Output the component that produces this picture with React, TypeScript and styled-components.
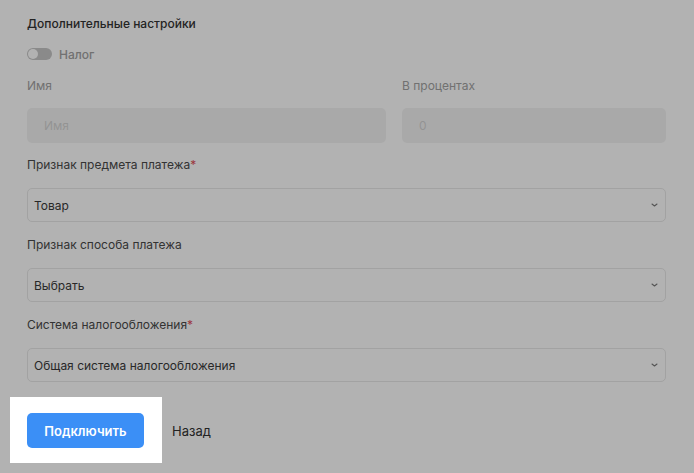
import React from 'react';
import styled, { createGlobalStyle } from 'styled-components';

const GlobalStyle = createGlobalStyle`
  html, body {
    margin: 0;
    padding: 0;
    background: #ffffff;
    font-family: Inter, 'Noto Sans', sans-serif;
    overflow: hidden;
  }
`;

const Page = styled.div`
  width: 694px;
  height: 473px;
  padding: 14px 28px 0 27px;
  box-sizing: border-box;
  display: flex;
  flex-direction: column;
`;

const Title = styled.div`
  font-size: 12px;
  font-weight: 500;
  line-height: 20px;
  color: #333333;
`;

const ToggleRow = styled.div`
  display: flex;
  align-items: center;
  gap: 7px;
  height: 20px;
  margin-top: 10px;
  font-size: 12px;
  font-weight: 500;
  color: #a2a2a2;
`;

const Track = styled.div`
  width: 25px;
  height: 12px;
  border-radius: 6px;
  background: #c6c6c6;
  padding: 1px;
  box-sizing: border-box;
  display: flex;
  align-items: center;
`;

const Knob = styled.div`
  width: 10px;
  height: 10px;
  border-radius: 50%;
  background: #ffffff;
`;

const Row = styled.div`
  display: grid;
  grid-template-columns: 359px 1fr;
  column-gap: 16px;
  margin-top: 12px;
`;

const Field = styled.div`
  display: flex;
  flex-direction: column;
`;

const Label = styled.div<{ $muted?: boolean }>`
  font-size: 12px;
  line-height: 20px;
  color: ${p => (p.$muted ? '#a2a2a2' : '#4a4a4a')};
  margin-bottom: ${p => (p.$muted ? '12px' : '13px')};
`;

const Star = styled.span`
  color: #e0505a;
`;

const DisabledInput = styled.div`
  height: 35px;
  border-radius: 5px;
  background: #f3f3f3;
  padding: 0 17px;
  display: flex;
  align-items: center;
  font-size: 12px;
  color: #d3d3d3;
`;

const Select = styled.div`
  height: 34px;
  box-sizing: border-box;
  border: 1px solid #e8e8e8;
  border-radius: 5px;
  background: #ffffff;
  padding: 0 7px 0 6px;
  display: flex;
  align-items: center;
  justify-content: space-between;
  font-size: 12px;
  color: #3a3a3a;
  margin-bottom: 13px;
`;

const FormBlock = styled.div`
  margin-top: 12px;
  display: flex;
  flex-direction: column;
`;

const Actions = styled.div`
  display: flex;
  align-items: center;
  gap: 28px;
  margin-top: 18px;
`;

const Spot = styled.div`
  position: relative;
  z-index: 1;

  &::before {
    content: '';
    position: absolute;
    top: -16px;
    right: -18px;
    bottom: -15px;
    left: -17px;
    background: #ffffff;
    box-shadow: 0 0 0 3000px rgba(0, 0, 0, 0.3);
    z-index: -1;
  }
`;

const Primary = styled.button`
  width: 117px;
  height: 35px;
  border: none;
  border-radius: 5px;
  background: #3b8ff6;
  color: #ffffff;
  font-family: inherit;
  font-size: 13px;
  font-weight: 600;
  cursor: pointer;
  display: block;
`;

const Back = styled.span`
  font-size: 13px;
  color: #333333;
`;

const Chevron = () => (
  <svg width="7" height="4" viewBox="0 0 7 4" fill="none">
    <path d="M1 1l2.5 2 2.5-2" stroke="#7a7a7a" strokeWidth="1.1" strokeLinecap="round" strokeLinejoin="round" />
  </svg>
);

type SelectItem = {
  label: string;
  value: string;
  required?: boolean;
};

const selects: SelectItem[] = [
  { label: 'Признак предмета платежа', value: 'Товар', required: true },
  { label: 'Признак способа платежа', value: 'Выбрать' },
  { label: 'Система налогообложения', value: 'Общая система налогообложения', required: true },
];

const App = () => {
  return (
    <>
      <GlobalStyle />
      <Page>
        <Title>Дополнительные настройки</Title>
        <ToggleRow>
          <Track>
            <Knob />
          </Track>
          Налог
        </ToggleRow>
        <Row>
          <Field>
            <Label $muted>Имя</Label>
            <DisabledInput>Имя</DisabledInput>
          </Field>
          <Field>
            <Label $muted>В процентах</Label>
            <DisabledInput>0</DisabledInput>
          </Field>
        </Row>
        <FormBlock>
          {selects.map(item => (
            <Field key={item.label}>
              <Label>
                {item.label}
                {item.required && <Star>*</Star>}
              </Label>
              <Select>
                <span>{item.value}</span>
                <Chevron />
              </Select>
            </Field>
          ))}
        </FormBlock>
        <Actions>
          <Spot>
            <Primary>Подключить</Primary>
          </Spot>
          <Back>Назад</Back>
        </Actions>
      </Page>
    </>
  );
};

export default App;
